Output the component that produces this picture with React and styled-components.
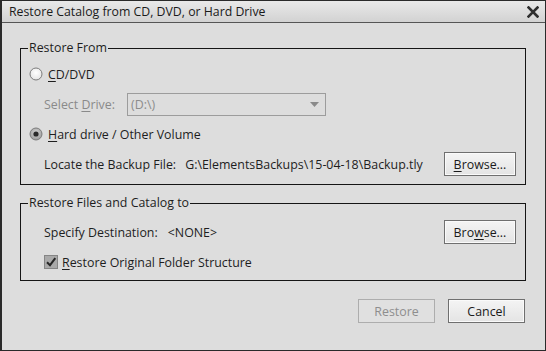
import React from "react";
import styled, { createGlobalStyle } from "styled-components";

const Global = createGlobalStyle`
  html, body { margin: 0; padding: 0; background: #dcdcdc; }
  * { box-sizing: border-box; }
`;

const Window = styled.div`
  width: 546px;
  height: 351px;
  background: #dddddd;
  border: 1px solid #2a2a2a;
  border-left-width: 2px;
  display: flex;
  flex-direction: column;
  font-family: "Open Sans", "Noto Sans", sans-serif;
  font-size: 12.4px;
  color: #1e1e1e;
`;

const TitleBar = styled.div`
  height: 22px;
  flex: none;
  display: flex;
  align-items: center;
  justify-content: space-between;
  padding: 0 6px 0 7px;
  background: linear-gradient(#e9e9e9, #d2d2d2);
  border-bottom: 1px solid #555;
  font-size: 12.3px;
  color: #1a1a1a;
`;

const Body = styled.div`
  flex: 1;
  display: flex;
  flex-direction: column;
  padding: 17px 19px 0 18px;
`;

const Group = styled.fieldset`
  margin: 0 0 ${(p) => p.$mb || 0}px 0;
  padding: ${(p) => p.$pt}px 9px ${(p) => p.$pb}px 8px;
  border: 1px solid #151515;
  display: flex;
  flex-direction: column;
  min-width: 0;
`;

const Legend = styled.legend`
  padding: 0 1px;
  margin-left: -1px;
  line-height: 16px;
  font-size: 12.4px;
`;

const Row = styled.div`
  height: ${(p) => p.$h || 30}px;
  display: flex;
  align-items: center;
  padding-left: ${(p) => p.$indent || 0}px;
  color: ${(p) => (p.$disabled ? "#8a8a8a" : "inherit")};
`;

const Label = styled.span`
  white-space: nowrap;
`;

const Value = styled.span`
  margin-left: ${(p) => p.$gap}px;
  white-space: nowrap;
`;

const Spacer = styled.div`
  flex: 1;
`;

const Button = styled.button`
  width: ${(p) => p.$w}px;
  height: 24px;
  padding: 0;
  font-family: inherit;
  font-size: 12.4px;
  color: ${(p) => (p.disabled ? "#8e8e8e" : "#1a1a1a")};
  background: ${(p) =>
    p.disabled ? "#e0e0e0" : "linear-gradient(#f4f4f4, #e4e4e4)"};
  border: 1px solid ${(p) => (p.disabled ? "#adadad" : "#6f6f6f")};
  border-radius: 0;
  box-shadow: ${(p) => (p.disabled ? "none" : "inset 0 0 0 1px #fafafa")};
`;

const Select = styled.div`
  width: 199px;
  height: 23px;
  margin-left: 12px;
  border: 1px solid #9c9c9c;
  display: flex;
  align-items: center;
  justify-content: space-between;
  padding: 0 6px 0 3px;
  color: #8c8c8c;
`;

const Footer = styled.div`
  display: flex;
  justify-content: flex-end;
  gap: 13px;
  margin-top: 18px;
  padding-right: 1px;
`;

const Mnemonic = styled.u`
  text-decoration: underline;
  text-underline-offset: 2px;
`;

const ControlLabel = styled.span`
  margin-left: ${(p) => p.$gap}px;
  white-space: nowrap;
`;

const Radio = ({ checked }) => (
  <svg width="14" height="14" viewBox="0 0 14 14">
    <defs>
      <radialGradient id={checked ? "rg1" : "rg0"} cx="50%" cy="40%" r="60%">
        <stop offset="0%" stopColor={checked ? "#d8d8d8" : "#ffffff"} />
        <stop offset="100%" stopColor={checked ? "#9a9a9a" : "#e4e4e4"} />
      </radialGradient>
    </defs>
    <circle cx="7" cy="7" r="6" fill={`url(#${checked ? "rg1" : "rg0"})`} stroke="#7c7c7c" strokeWidth="1" />
    {checked && <circle cx="7" cy="7" r="2.6" fill="#2a2a2a" />}
  </svg>
);

const Checkbox = () => (
  <svg width="14" height="14" viewBox="0 0 14 14">
    <rect x="0.5" y="0.5" width="13" height="13" fill="#a9a9a9" stroke="#858585" />
    <path d="M3 7.2 L6 10.2 L11.3 3.2" fill="none" stroke="#262626" strokeWidth="2" />
  </svg>
);

const CloseIcon = () => (
  <svg width="12" height="12" viewBox="0 0 12 12">
    <path d="M1.5 1.5 L10.5 10.5 M10.5 1.5 L1.5 10.5" stroke="#2e2e2e" strokeWidth="2.6" strokeLinecap="square" />
  </svg>
);

const Arrow = () => (
  <svg width="9" height="5" viewBox="0 0 9 5">
    <path d="M0 0 L9 0 L4.5 5 Z" fill="#8a8a8a" />
  </svg>
);

export default function App() {
  return (
    <>
      <Global />
      <Window>
        <TitleBar>
          <span>Restore Catalog from CD, DVD, or Hard Drive</span>
          <CloseIcon />
        </TitleBar>
        <Body>
          <Group $pt={3} $pb={5} $mb={10}>
            <Legend>Restore From</Legend>
            <Row>
              <Radio />
              <ControlLabel $gap={5}>
                <Mnemonic>C</Mnemonic>D/DVD
              </ControlLabel>
            </Row>
            <Row $indent={15} $disabled>
              <Label>
                Select <Mnemonic>D</Mnemonic>rive:
              </Label>
              <Select>
                <span>(D:\)</span>
                <Arrow />
              </Select>
            </Row>
            <Row>
              <Radio checked />
              <ControlLabel $gap={5}>
                <Mnemonic>H</Mnemonic>ard drive / Other Volume
              </ControlLabel>
            </Row>
            <Row $indent={15}>
              <Label>Locate the Backup File:</Label>
              <Value $gap={9}>G:\ElementsBackups\15-04-18\Backup.tly</Value>
              <Spacer />
              <Button $w={72}>
                <Mnemonic>B</Mnemonic>rowse...
              </Button>
            </Row>
          </Group>
          <Group $pt={6} $pb={3}>
            <Legend>Restore Files and Catalog to</Legend>
            <Row $indent={15}>
              <Label>Specify Destination:</Label>
              <Value $gap={10}>&lt;NONE&gt;</Value>
              <Spacer />
              <Button $w={72}>
                Bro<Mnemonic>w</Mnemonic>se...
              </Button>
            </Row>
            <Row $indent={15}>
              <Checkbox />
              <ControlLabel $gap={4}>
                <Mnemonic>R</Mnemonic>estore Original Folder Structure
              </ControlLabel>
            </Row>
          </Group>
          <Footer>
            <Button $w={77} disabled>
              Restore
            </Button>
            <Button $w={77}>Cancel</Button>
          </Footer>
        </Body>
      </Window>
    </>
  );
}
